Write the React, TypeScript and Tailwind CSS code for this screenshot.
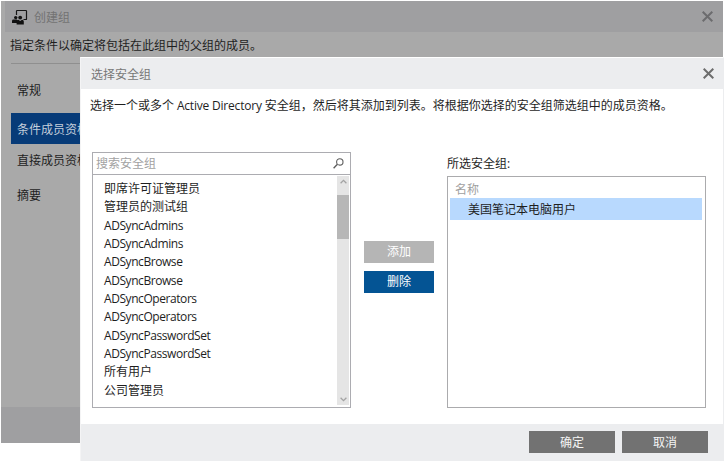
import React from 'react';

const groups = [
  '即席许可证管理员',
  '管理员的测试组',
  'ADSyncAdmins',
  'ADSyncAdmins',
  'ADSyncBrowse',
  'ADSyncBrowse',
  'ADSyncOperators',
  'ADSyncOperators',
  'ADSyncPasswordSet',
  'ADSyncPasswordSet',
  '所有用户',
  '公司管理员',
];

function CloseIcon({ className }: { className: string }) {
  return (
    <svg className={className} width="11" height="11" viewBox="0 0 11 11" fill="none" stroke="currentColor" strokeWidth="2">
      <path d="M0.7 0.7 10.3 10.3M10.3 0.7 0.7 10.3" />
    </svg>
  );
}

function GroupIcon() {
  return (
    <svg className="shrink-0" width="16" height="16" viewBox="0 0 16 16" fill="none">
      <path d="M4.5 6V2.1Q4.5 1.5 5.1 1.5H13.9Q14.5 1.5 14.5 2.1V9.9Q14.5 10.5 13.9 10.5H11.5" stroke="#161616" strokeWidth="1.2" />
      <circle cx="3.7" cy="8.6" r="1.7" fill="#111" />
      <circle cx="8.2" cy="8.6" r="1.9" fill="#111" />
      <path d="M0 14V12Q0 10.6 1.6 10.6H5L5.6 11.5V14Z" fill="#111" />
      <path d="M4.6 15.6V12.4Q4.6 10.8 6.4 10.8L8.2 12 10 10.8Q11.8 10.8 11.8 12.4V15.6Z" fill="#111" />
    </svg>
  );
}

function Chevron({ down = false }: { down?: boolean }) {
  return (
    <svg width="7" height="5" viewBox="0 0 7 5" fill="none" stroke="#a3a3a3" strokeWidth="1.3">
      <path d={down ? 'M0.6 0.8 3.5 3.7 6.4 0.8' : 'M0.6 4.2 3.5 1.3 6.4 4.2'} />
    </svg>
  );
}

function ParentWindow() {
  return (
    <div className="mt-px ml-px flex h-[442px] w-[722px] flex-col bg-[#a9a9a9]">
      <div className="ml-1 flex h-[31px] items-center bg-[#9f9fa1] pr-[10px] pl-[7px] text-[#737373]">
        <GroupIcon />
        <span className="ml-[6px] pt-[2px]">创建组</span>
        <CloseIcon className="ml-auto text-[#6c6c6e]" />
      </div>
      <div className="ml-[9px] h-[31px] pt-[5px]">指定条件以确定将包括在此组中的父组的成员。</div>
      <div className="mr-4 ml-[10px] h-px bg-[#8f8f8f]" />
      <nav className="ml-[10px] flex w-[160px] flex-col pt-[11px]">
        <div className="flex h-[32px] items-center pl-[6px]">常规</div>
        <div className="mt-[6px] flex h-[31px] items-center bg-[#073b78] pt-[2px] pl-[6px] text-[#c4cedb]">条件成员资格</div>
        <div className="flex h-[32px] items-center pt-[2px] pl-[6px]">直接成员资格</div>
        <div className="mt-[3px] flex h-[32px] items-center pt-[2px] pl-[6px]">摘要</div>
      </nav>
      <div className="mt-auto h-[36px] bg-[#9f9fa1]" />
    </div>
  );
}

function SourceList() {
  return (
    <div className="mt-[36px] flex h-[256px] w-[259px] shrink-0 flex-col border border-[#acacb1]">
      <div className="flex h-[22px] shrink-0 items-center justify-between border-b border-[#acacb1] pr-[6px] pl-[3px] text-[#a2a2a2]">
        <span>搜索安全组</span>
        <svg width="11" height="11" viewBox="0 0 11 11" fill="none" stroke="#5e5e5e">
          <circle cx="6.8" cy="3.9" r="3.2" strokeWidth="1.1" />
          <path d="M4.4 6.3 0.6 10.2" strokeWidth="1.4" />
        </svg>
      </div>
      <div className="flex min-h-0 flex-1 justify-between">
        <ul className="pt-[5px] pl-[11px] tracking-[-0.43px]">
          {groups.map((g, i) => (
            <li key={i} className={/^[A-Z]/.test(g) ? 'h-[18.35px] leading-[18.35px]' : 'h-[18.35px] leading-[18.35px] tracking-normal'}>{g}</li>
          ))}
        </ul>
        <div className="mt-px mr-px mb-[2px] flex w-[12px] flex-col items-center bg-[#e5e5e5]">
          <div className="flex h-[19px] items-start pt-[3px]"><Chevron /></div>
          <div className="h-[44px] w-full bg-[#b7b7b7]" />
          <div className="mt-auto pb-[3px]"><Chevron down /></div>
        </div>
      </div>
    </div>
  );
}

function SelectGroupsDialog() {
  return (
    <div className="absolute top-[57px] left-[80px] flex h-[404px] w-[644px] flex-col border-t border-r border-l border-t-white border-r-[#ecedef] border-l-[#f4f4f5] bg-white">
      <div className="flex h-[31px] shrink-0 items-center bg-[#ecedef] pr-[9px] pl-[10px] text-[#777]">
        <span className="pt-[2px]">选择安全组</span>
        <CloseIcon className="ml-auto text-[#6d6d6d]" />
      </div>
      <p className="mt-[7px] ml-[9px] h-[20px] shrink-0 leading-[20px] whitespace-nowrap">
        选择一个或多个<span className="tracking-[-0.2px]"> Active Directory </span>安全组，然后将其添加到列表。将根据你选择的安全组筛选组中的成员资格。
      </p>
      <div className="flex h-[308px] shrink-0 pl-[11px]">
        <SourceList />
        <div className="mt-[125px] ml-[13px] flex w-[70px] flex-col gap-2 text-white">
          <button className="h-[22px] bg-[#b5b5b5] leading-[22px]">添加</button>
          <button className="h-[22px] bg-[#045494] leading-[22px]">删除</button>
        </div>
        <div className="mt-[38px] ml-[13px] w-[259px]">
          <div className="h-[22px] leading-[20px]">所选安全组:</div>
          <div className="h-[232px] border border-[#ababad] px-[2px] pt-[3px]">
            <div className="h-[18px] pl-[5px] leading-[20px] text-[#a0a0a0]">名称</div>
            <div className="mr-px h-[22px] bg-[#b8d9fe] pl-[18px] leading-[24px]">美国笔记本电脑用户</div>
          </div>
        </div>
      </div>
      <div className="flex flex-1 justify-end gap-[7px] bg-[#ecedef] pt-[7px] pr-[15px] text-[#f5f5f5]">
        <button className="h-[22px] w-[86px] bg-[#727272] leading-[22px] pt-px">确定</button>
        <button className="h-[22px] w-[86px] bg-[#727272] leading-[22px] pt-px">取消</button>
      </div>
    </div>
  );
}

export default function App() {
  return (
    <div className="relative flex h-[461px] w-[725px] flex-col overflow-hidden bg-white font-['Open_Sans','Noto_Sans_CJK_SC',sans-serif] text-[12px] leading-[18px] text-[#1e1e1e]">
      <ParentWindow />
      <SelectGroupsDialog />
    </div>
  );
}
